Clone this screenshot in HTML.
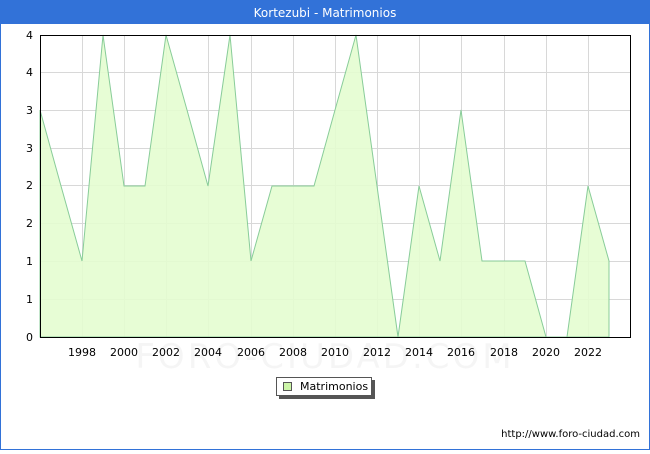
<!DOCTYPE html>
<html><head><meta charset="utf-8"><style>
body{margin:0;width:650px;height:450px;overflow:hidden;background:#fff;font-family:"DejaVu Sans","Liberation Sans",sans-serif;}
</style></head><body>
<svg width="650" height="450" xmlns="http://www.w3.org/2000/svg" font-family="DejaVu Sans, Liberation Sans, sans-serif">
<rect x="0.5" y="0.5" width="649" height="449" fill="#fff" stroke="#3272d8"/>
<rect x="0" y="0" width="650" height="24" fill="#3272d8"/>
<text x="325" y="17" fill="#fff" font-size="12" text-anchor="middle">Kortezubi - Matrimonios</text>
<g stroke="#d8d8d8" stroke-width="1">
<line x1="40" y1="299.5" x2="630" y2="299.5"/><line x1="40" y1="261.5" x2="630" y2="261.5"/>
<line x1="40" y1="223.5" x2="630" y2="223.5"/><line x1="40" y1="185.5" x2="630" y2="185.5"/>
<line x1="40" y1="148.5" x2="630" y2="148.5"/><line x1="40" y1="110.5" x2="630" y2="110.5"/>
<line x1="40" y1="72.5" x2="630" y2="72.5"/>
<line x1="82.5" y1="35" x2="82.5" y2="337"/><line x1="124.5" y1="35" x2="124.5" y2="337"/>
<line x1="166.5" y1="35" x2="166.5" y2="337"/><line x1="208.5" y1="35" x2="208.5" y2="337"/>
<line x1="251.5" y1="35" x2="251.5" y2="337"/><line x1="293.5" y1="35" x2="293.5" y2="337"/>
<line x1="335.5" y1="35" x2="335.5" y2="337"/><line x1="377.5" y1="35" x2="377.5" y2="337"/>
<line x1="419.5" y1="35" x2="419.5" y2="337"/><line x1="461.5" y1="35" x2="461.5" y2="337"/>
<line x1="504.5" y1="35" x2="504.5" y2="337"/><line x1="546.5" y1="35" x2="546.5" y2="337"/>
<line x1="588.5" y1="35" x2="588.5" y2="337"/>
</g>
<polygon fill="#e4fdd0" fill-opacity="0.9" stroke="#88cc99" stroke-width="1" points="40,337 40,110 61,186 82,261 103,35 124,186 145,186 166,35 187,110 208,186 230,35 251,261 272,186 293,186 314,186 335,110 356,35 377,186 398,337 419,186 440,261 461,110 482,261 504,261 525,261 546,337 567,337 588,186 609,261 609,337"/>
<text x="325" y="368" font-size="34" fill="#000" fill-opacity="0.04" text-anchor="middle" letter-spacing="3">FORO-CIUDAD.COM</text>
<rect x="40.5" y="35.5" width="590" height="302" fill="none" stroke="#000"/>
<g font-size="11" fill="#000" text-anchor="end">
<text x="33" y="341">0</text><text x="33" y="303">1</text><text x="33" y="265">1</text>
<text x="33" y="227">2</text><text x="33" y="189">2</text><text x="33" y="152">3</text>
<text x="33" y="114">3</text><text x="33" y="76">4</text><text x="33" y="39">4</text>
</g>
<g font-size="11" fill="#000" text-anchor="middle">
<text x="82" y="356">1998</text><text x="124" y="356">2000</text><text x="166" y="356">2002</text>
<text x="208" y="356">2004</text><text x="251" y="356">2006</text><text x="293" y="356">2008</text>
<text x="335" y="356">2010</text><text x="377" y="356">2012</text><text x="419" y="356">2014</text>
<text x="461" y="356">2016</text><text x="504" y="356">2018</text><text x="546" y="356">2020</text>
<text x="588" y="356">2022</text>
</g>
<rect x="279" y="380" width="96" height="19" fill="#555"/>
<rect x="276.5" y="377.5" width="95" height="18" fill="#fff" stroke="#555"/>
<rect x="283.5" y="382.5" width="8" height="8" fill="#ccf5a8" stroke="#555"/>
<text x="300" y="390" font-size="11">Matrimonios</text>
<text x="640" y="437" font-size="10" text-anchor="end">http://www.foro-ciudad.com</text>
</svg>
</body></html>
